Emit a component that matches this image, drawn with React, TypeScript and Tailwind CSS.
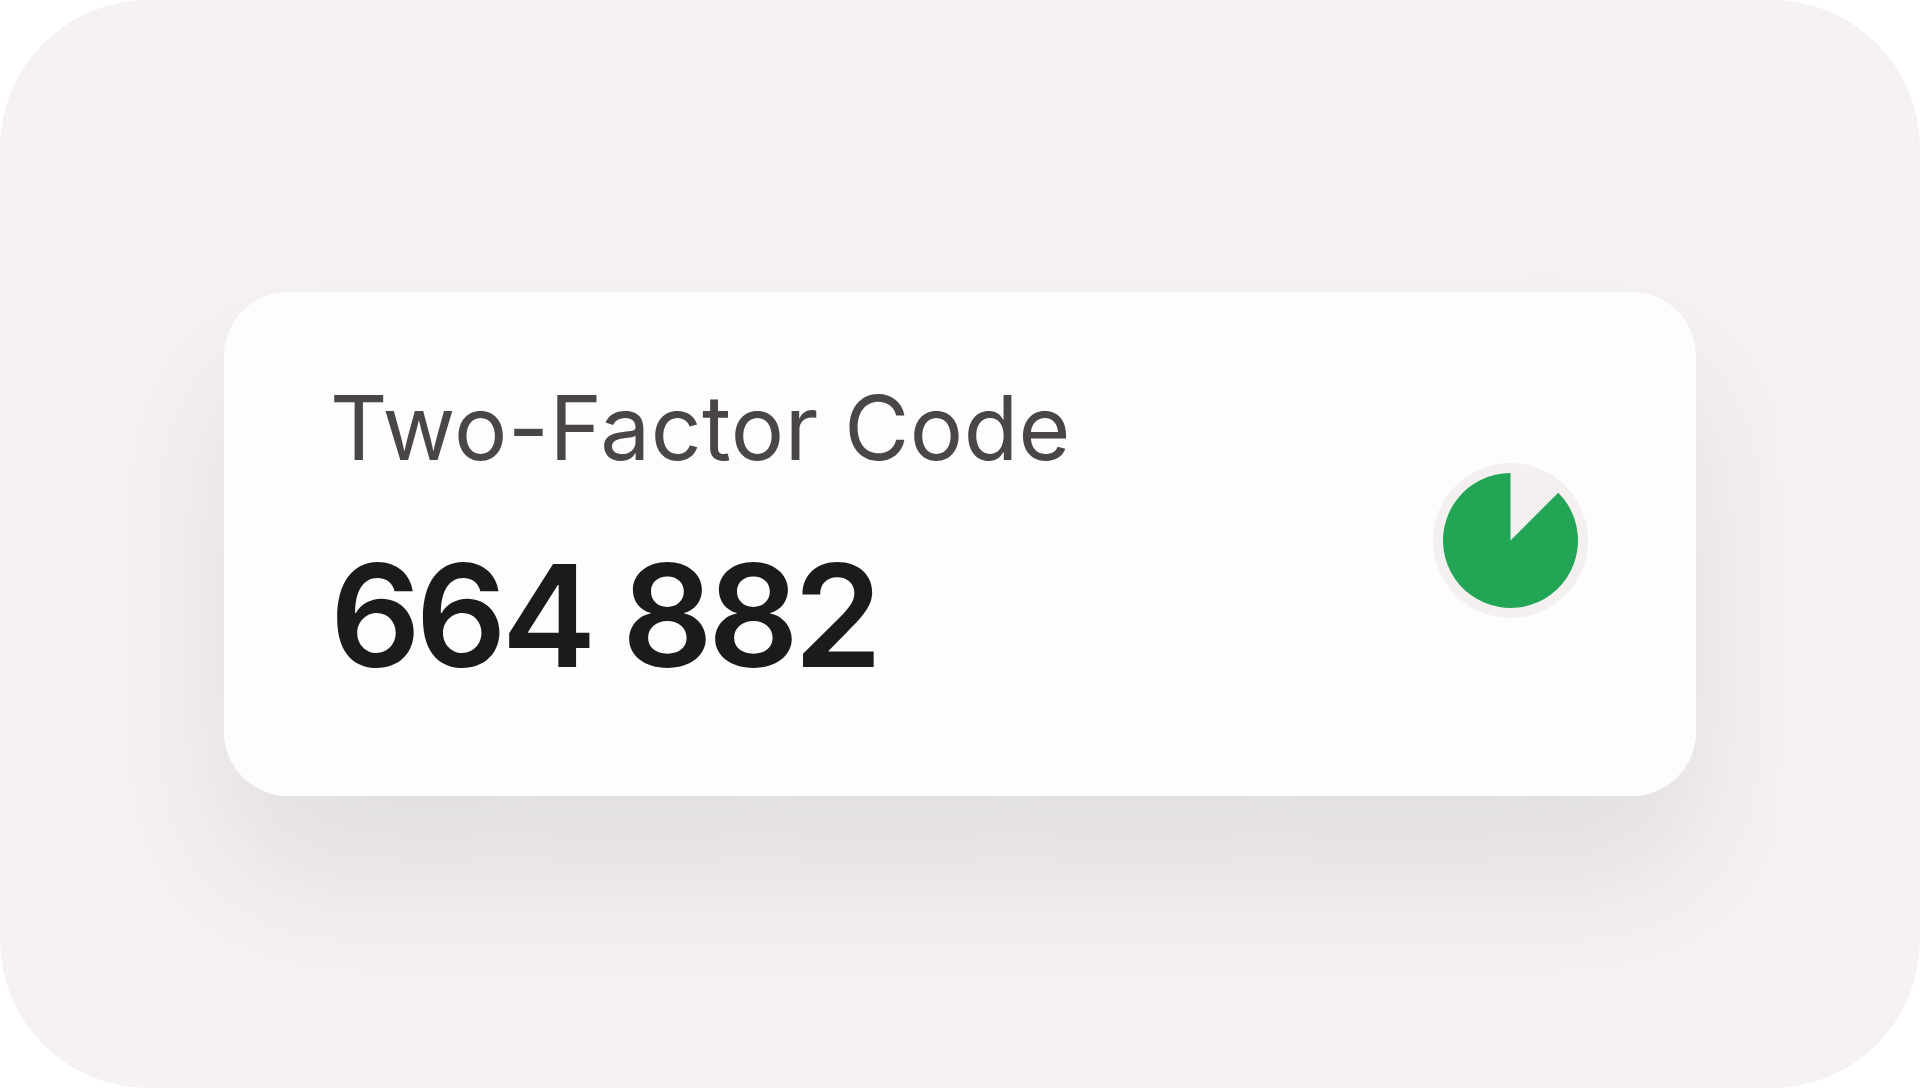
export default function App() {
  return (
    <div className="h-[1088px] w-[1920px] bg-white" style={{ fontFamily: "Inter, 'Noto Sans', sans-serif" }}>
      <div className="flex h-full w-full items-center justify-center rounded-[148px] bg-[#f5f2f1]">
        <div className="flex h-[504px] w-[1472px] items-center justify-between rounded-[64px] bg-[#fefdfd] pl-[106px] pr-[108px] shadow-[0_80px_140px_rgba(60,40,50,0.10)]">
          <div className="flex flex-col pb-[20px]">
            <span className="text-[89px] leading-none tracking-[0.5px] text-[#4a4548]">Two-Factor Code</span>
            <span className="mt-[72px] text-[142px] font-semibold leading-none tracking-[-5px] text-[#1c1a1d]">664 882</span>
          </div>
          <div className="mb-[8px]">
            <TimerRing />
          </div>
        </div>
      </div>
    </div>
  );
}

function TimerRing() {
  // 7/8 of the period left: wedge missing from 12 o'clock to 45°
  const r = 67.5;
  const cx = 77.5;
  const cy = 77.5;
  const a = (45 * Math.PI) / 180;
  const ex = cx + r * Math.sin(a);
  const ey = cy - r * Math.cos(a);
  return (
    <div className="flex h-[155px] w-[155px] items-center justify-center rounded-full bg-[#f4f0f0]">
      <svg width="155" height="155" viewBox="0 0 155 155">
        <path
          d={`M${cx} ${cy} L${cx} ${cy - r} A${r} ${r} 0 1 0 ${ex} ${ey} Z`}
          fill="#22a655"
        />
      </svg>
    </div>
  );
}
